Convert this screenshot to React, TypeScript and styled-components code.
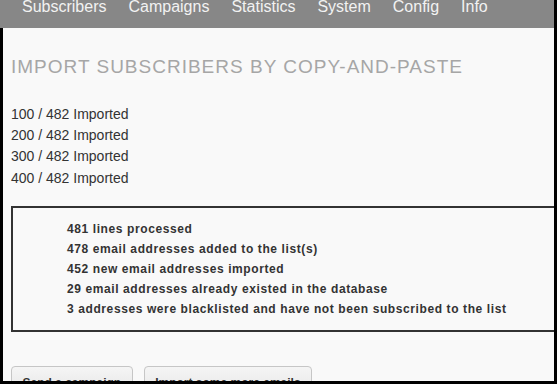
import React from "react";
import styled, { createGlobalStyle } from "styled-components";

const Global = createGlobalStyle`
  html, body { margin: 0; padding: 0; background: #000; }
  body { font-family: "Liberation Sans", Arial, sans-serif; }
`;

const Frame = styled.div`
  width: 557px;
  height: 384px;
  box-sizing: border-box;
  padding: 0 3px 3px 0;
  background: #000;
  display: flex;
  flex-direction: column;
  overflow: hidden;
`;

const Nav = styled.nav`
  flex: 0 0 28px;
  background: #878787;
  display: flex;
  align-items: flex-start;
  padding-left: 11px;
  overflow: hidden;
`;

const NavLink = styled.a`
  padding: 0 11px;
  margin-top: -1px;
  font-size: 16px;
  line-height: 16px;
  color: #f2f2f2;
  text-decoration: none;
  white-space: nowrap;
`;

const Content = styled.main`
  flex: 1;
  margin-left: 3px;
  background: #f9f9f9;
  padding: 28px 0 0 8px;
  overflow: hidden;
  color: #333;
`;

const Title = styled.h1`
  margin: 0;
  font-size: 19px;
  line-height: 22px;
  font-weight: normal;
  letter-spacing: 1px;
  color: #a6a6a6;
  white-space: nowrap;
`;

const Progress = styled.div`
  margin-top: 26px;
`;

const ProgressLine = styled.div`
  font-size: 14px;
  line-height: 21.2px;
  color: #333;
`;

const Summary = styled.div`
  margin-top: 17px;
  width: 560px;
  border: 2px solid #333;
  padding: 11px 0 11px 54px;
`;

const SummaryLine = styled.div`
  font-size: 12px;
  line-height: 20px;
  font-weight: bold;
  letter-spacing: 0.6px;
  color: #333;
  white-space: nowrap;
`;

const Actions = styled.div`
  margin-top: 34px;
  display: flex;
  gap: 11px;
`;

const Button = styled.button`
  font-family: "Liberation Sans", Arial, sans-serif;
  font-size: 12px;
  font-weight: bold;
  color: #333;
  line-height: 14px;
  padding: 9px 10.5px 8px;
  border: 1px solid #c6c6c6;
  border-radius: 4px;
  background: linear-gradient(#f5f5f5, #e4e4e4);
  white-space: nowrap;
`;

const navItems = ["Subscribers", "Campaigns", "Statistics", "System", "Config", "Info"];
const progress = [100, 200, 300, 400];
const summary = [
  "481 lines processed",
  "478 email addresses added to the list(s)",
  "452 new email addresses imported",
  "29 email addresses already existed in the database",
  "3 addresses were blacklisted and have not been subscribed to the list",
];

export default function App() {
  return (
    <>
      <Global />
      <Frame>
        <Nav>
          {navItems.map((n) => (
            <NavLink key={n} href="#">{n}</NavLink>
          ))}
        </Nav>
        <Content>
          <Title>IMPORT SUBSCRIBERS BY COPY-AND-PASTE</Title>
          <Progress>
            {progress.map((p) => (
              <ProgressLine key={p}>{p} / 482 Imported</ProgressLine>
            ))}
          </Progress>
          <Summary>
            {summary.map((s) => (
              <SummaryLine key={s}>{s}</SummaryLine>
            ))}
          </Summary>
          <Actions>
            <Button>Send a campaign</Button>
            <Button>Import some more emails</Button>
          </Actions>
        </Content>
      </Frame>
    </>
  );
}
